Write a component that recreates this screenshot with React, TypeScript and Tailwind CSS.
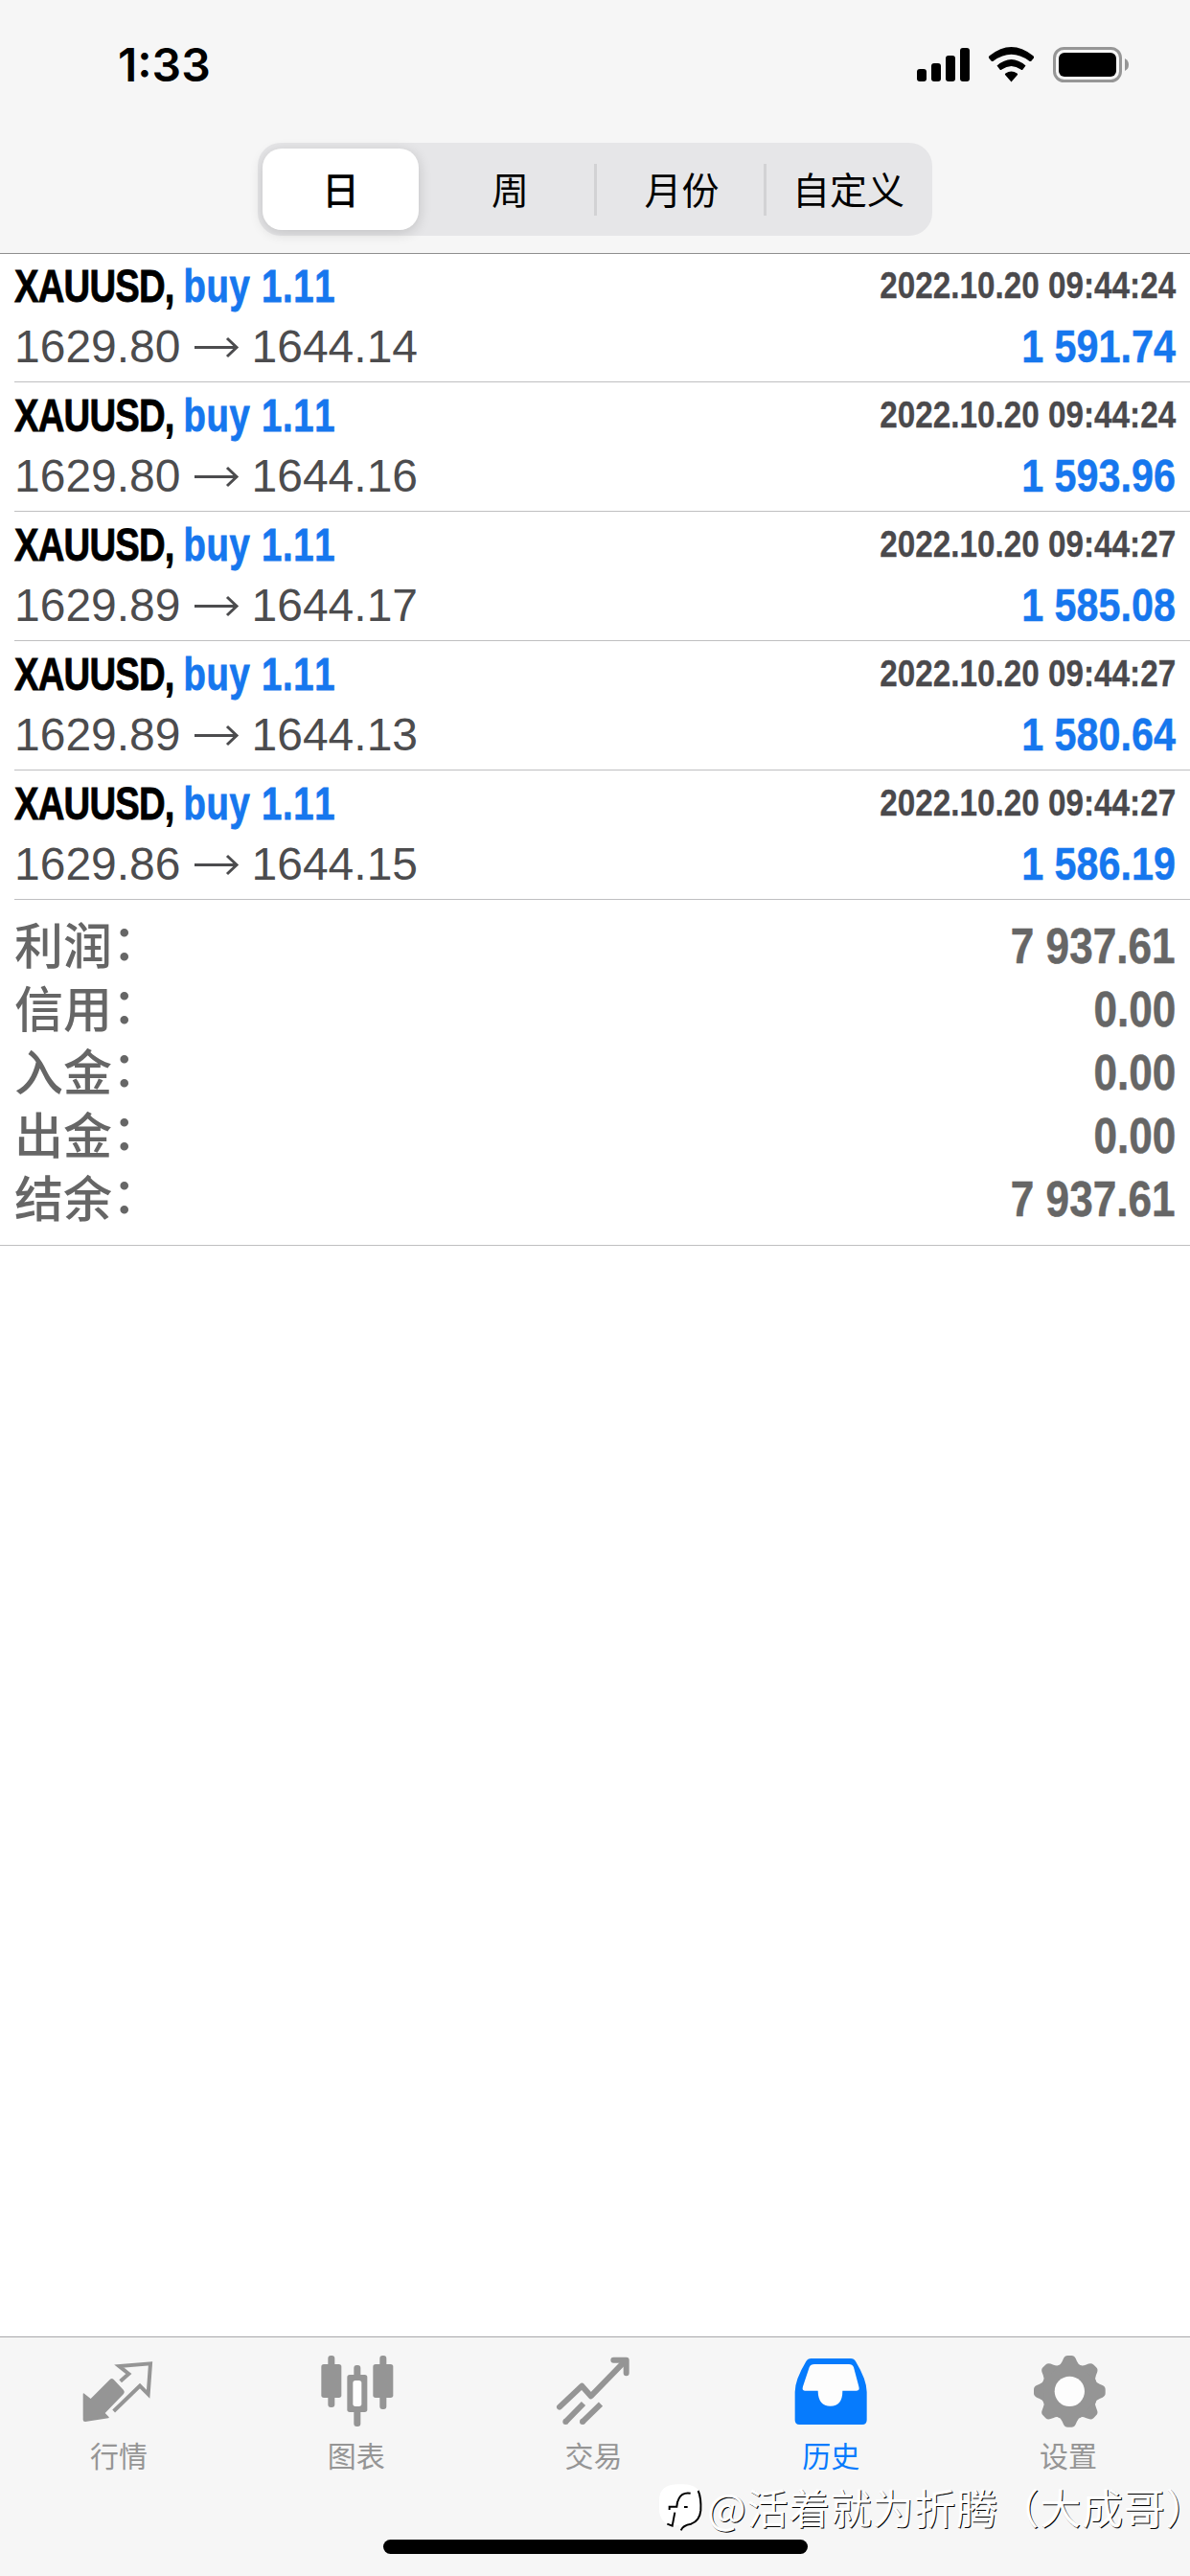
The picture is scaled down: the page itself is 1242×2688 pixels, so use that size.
import React from "react";

const deals = [
  { open: "1629.80", close: "1644.14", time: "2022.10.20 09:44:24", profit: "1 591.74" },
  { open: "1629.80", close: "1644.16", time: "2022.10.20 09:44:24", profit: "1 593.96" },
  { open: "1629.89", close: "1644.17", time: "2022.10.20 09:44:27", profit: "1 585.08" },
  { open: "1629.89", close: "1644.13", time: "2022.10.20 09:44:27", profit: "1 580.64" },
  { open: "1629.86", close: "1644.15", time: "2022.10.20 09:44:27", profit: "1 586.19" },
];

const totals = [
  { label: "利润", value: "7 937.61" },
  { label: "信用", value: "0.00" },
  { label: "入金", value: "0.00" },
  { label: "出金", value: "0.00" },
  { label: "结余", value: "7 937.61" },
];

const StatusIcons = () => (
  <svg width="224" height="40" viewBox="0 0 224 40" className="mt-[48px]">
    <rect x="0" y="24" width="10" height="13" rx="3" />
    <rect x="15" y="18" width="10" height="19" rx="3" />
    <rect x="30" y="10" width="10" height="27" rx="3" />
    <rect x="45" y="2" width="10" height="35" rx="3" />
    <path d="M75 12.5 Q74.500 11 76 10 Q98.500 -8 121 10 Q122.500 11 122 12.500 L119.500 15.500 Q118.500 16.500 117 15.500 Q98.500 2 80 15.500 Q78.500 16.500 77.500 15.500 Z" />
    <path d="M83.500 20.500 Q98.500 7.500 113.500 20.500 L110.500 24.500 Q109.500 25.500 108.500 24.500 Q98.500 17.500 88.500 24.500 Q87.500 25.500 86.500 24.500 Z" />
    <path d="M92 30 Q91.500 29 92.500 28.500 Q98.500 24.500 104.500 28.500 Q105.500 29 105 30 L98.500 37.500 Z" />
    <rect x="143.500" y="2.500" width="69" height="34" rx="10" fill="none" stroke="#969696" strokeWidth="3" />
    <rect x="148" y="7" width="60" height="25" rx="6" />
    <path d="M217 13 Q221 15 221 19.500 Q221 24 217 26 Z" fill="#969696" />
  </svg>
);

const QuotesIcon = () => (
  <svg width="78" height="78" viewBox="0 0 234 234" fill="none">
    <path
      d="M5 127q0-5 4-2l20 16 60-60q6-6 12 0l31 33q5 6 0 12l-58 60 11 11q4 4-1 5L12 213q-7 0-7-6z"
      fill="currentColor"
    />
    <path d="M122 86l26-23-30-24 98-8-7 96-26-26-82 79" stroke="currentColor" strokeWidth="12" />
  </svg>
);

const ChartsIcon = () => (
  <svg width="78" height="78" viewBox="-3 0 234 234" fill="currentColor">
    <rect x="4" y="33" width="63" height="105" rx="8" />
    <rect x="25" y="6" width="21" height="162" rx="9" />
    <rect x="106" y="36" width="21" height="192" rx="9" />
    <rect x="85" y="66" width="63" height="117" rx="8" />
    <rect x="103" y="84" width="27" height="81" rx="8" fill="#fdfdfd" />
    <rect x="166" y="33" width="63" height="105" rx="8" />
    <rect x="187" y="6" width="21" height="168" rx="9" />
  </svg>
);

const TradeIcon = () => (
  <svg width="78" height="78" viewBox="-4 0 234 234" fill="none" stroke="currentColor" strokeWidth="18">
    <path d="M8 167l70-66 28 32L214 22" strokeLinecap="round" strokeLinejoin="round" />
    <path d="M177 20h40v41" strokeLinecap="round" strokeLinejoin="round" />
    <path d="M83 156l-57 58M137 158l-58 56" />
    <circle cx="27" cy="213" r="9" fill="currentColor" stroke="none" />
    <circle cx="80" cy="213" r="9" fill="currentColor" stroke="none" />
  </svg>
);

const HistoryIcon = () => (
  <svg width="78" height="78" viewBox="0 0 234 234">
    <path
      d="M56 15h124q10 0 15 9 35 58 35 96v88q0 14-14 14H19q-14 0-14-14v-88Q5 82 40 24q5-9 16-9z"
      fill="currentColor"
    />
    <path
      d="M66 33h108q11 0 15 10l16 60q4 13-7 13h-44q0 48-38 48-38 0-39-48H36q-10 0-6-13L50 43q4-10 16-10z"
      fill="#fdfdfd"
    />
  </svg>
);

const SettingsIcon = () => (
  <svg width="78" height="78" viewBox="0 0 234 234" fill="currentColor">
    <circle cx="121" cy="118" r="88" />
    {[0, 45, 90, 135, 180, 225, 270, 315].map((deg) => (
      <path
        key={deg}
        transform={`rotate(${deg} 121 118)`}
        d="M84 38q10-3 14-14l4-9q4-9 13-9h12q9 0 13 9l4 9q4 11 14 14z"
      />
    ))}
    <circle cx="121" cy="118" r="47" fill="#fdfdfd" />
  </svg>
);

const tabs = [
  { name: "行情", icon: <QuotesIcon /> },
  { name: "图表", icon: <ChartsIcon /> },
  { name: "交易", icon: <TradeIcon /> },
  { name: "历史", icon: <HistoryIcon />, active: true },
  { name: "设置", icon: <SettingsIcon /> },
];

const Watermark = () => (
  <div className="absolute left-[686px] top-[148px] flex items-center whitespace-nowrap">
    <svg width="52" height="56" viewBox="0 0 156 168" fill="none">
      <path
        d="M66 16h14q56 0 56 48v22q0 42-36 54l-28 20-4-16H58Q6 144 6 92V66Q6 16 66 16z"
        fill="#fff"
      />
      <path d="M128 36q10 22 8 62-3 32-30 42-26 4-32 20" stroke="#000" strokeWidth="6" />
      <path d="M104 44q-26-4-36 16-6 10-7 26H38v10M55 104l-8 42-16-6M84 87h11" stroke="#000" strokeWidth="6" />
    </svg>
    <span className="font-['Noto_Sans_CJK_SC',sans-serif] text-[43px] leading-[56px] tracking-[0.7px] text-white [text-shadow:1px_1px_0_#000]">
      @活着就为折腾（大成哥<span className="[font-feature-settings:'halt']">）</span>
    </span>
  </div>
);

const App = () => {
  return (
    <div className="flex h-[2688px] w-[1242px] flex-col overflow-hidden bg-white font-['Liberation_Sans','Noto_Sans_CJK_SC',sans-serif]">
      <header className="h-[265px] border-b border-[#8e8e8e] bg-[#f6f6f6]">
        <div className="flex h-[149px] justify-between pl-[123px] pr-[61px]">
          <span className="mt-[38px] font-['Inter',sans-serif] text-[48px] font-semibold leading-[60px]">
            1:33
          </span>
          <StatusIcons />
        </div>

        {/* Period switch */}
        <div className="mx-auto flex h-[97px] w-[704px] items-center rounded-[24px] bg-[#e6e6e8] px-[5px] font-['Noto_Sans_CJK_SC',sans-serif] text-[39px] text-black">
          <div className="flex h-[85px] w-[163px] items-center justify-center rounded-[20px] bg-white pb-[2px] font-medium shadow-[0_3px_14px_rgba(0,0,0,0.16)]">
            日
          </div>
          <div className="flex h-[54px] w-[186px] items-center justify-center border-r-[3px] border-[#d2d2d4] pb-[2px] pl-[8px]">
            周
          </div>
          <div className="flex h-[54px] w-[177px] items-center justify-center border-r-[3px] border-[#d2d2d4] pb-[2px] pl-[3px]">
            月份
          </div>
          <div className="flex flex-1 items-center justify-center pb-[2px] pl-[3px]">自定义</div>
        </div>
      </header>

      <main className="-mt-px flex-1">
        {deals.map((deal, i) => (
          <div key={i} className="ml-[15px] h-[135px] border-b border-[#bfbfc1] pr-[15px] pt-[3px] text-[48px] leading-[63px]">
            <div className="flex justify-between font-bold">
              <div className="origin-left scale-x-[0.797] whitespace-nowrap [-webkit-text-stroke:0.8px_currentColor]">
                <span className="tracking-[-1px] text-black">XAUUSD, </span>
                <span className="tracking-[0.9px] text-[#1677ee] [font-kerning:none]">buy 1.11</span>
              </div>
              <div className="relative -top-px origin-right scale-x-[0.853] whitespace-nowrap text-[39px] text-[#4a494c] [-webkit-text-stroke:0.3px_currentColor]">
                {deal.time}
              </div>
            </div>
            <div className="flex justify-between">
              <div className="flex items-center text-[#4c4c4e]">
                {deal.open}
                <svg width="48" height="24" viewBox="0 0 48 24" fill="none" stroke="currentColor" strokeWidth="3" className="mx-[13px]">
                  <path d="M1 12.500h44M35 3l10 9.500L35 22" />
                </svg>
                {deal.close}
              </div>
              <div className="origin-right scale-x-[0.86] whitespace-nowrap font-bold text-[#1677ee] [-webkit-text-stroke:0.5px_currentColor]">
                {deal.profit}
              </div>
            </div>
          </div>
        ))}

        <div className="border-b border-[#bfbfc1] px-[15px] py-[15px] text-[51px] leading-[66px] text-[#666]">
          {totals.map((item) => (
            <div key={item.label} className="flex h-[66px] justify-between">
              <div className="-mt-[3px] font-['Noto_Sans_CJK_SC',sans-serif] font-medium">
                {item.label}
                <span className="relative -top-[4px]">：</span>
              </div>
              <div className="mt-px origin-right scale-x-[0.865] whitespace-nowrap font-bold [-webkit-text-stroke:0.5px_currentColor]">
                {item.value}
              </div>
            </div>
          ))}
        </div>
      </main>

      <footer className="relative h-[250px] border-t border-[#a8a8aa] bg-[#f6f6f6]">
        <nav className="grid grid-cols-5 pr-[3px] pt-[17px]">
          {tabs.map((tab) => (
            <div
              key={tab.name}
              className={`flex flex-col items-center ${tab.active ? "text-[#067bfd]" : "text-[#959595]"}`}
            >
              {tab.icon}
              <span className="mt-[7px] font-['Noto_Sans_CJK_SC',sans-serif] text-[30px] leading-[40px]">{tab.name}</span>
            </div>
          ))}
        </nav>
        <Watermark />
        {/* Home indicator */}
        <div className="mx-auto mt-[69px] h-[15px] w-[443px] rounded-full bg-black" />
      </footer>
    </div>
  );
};

export default App;
